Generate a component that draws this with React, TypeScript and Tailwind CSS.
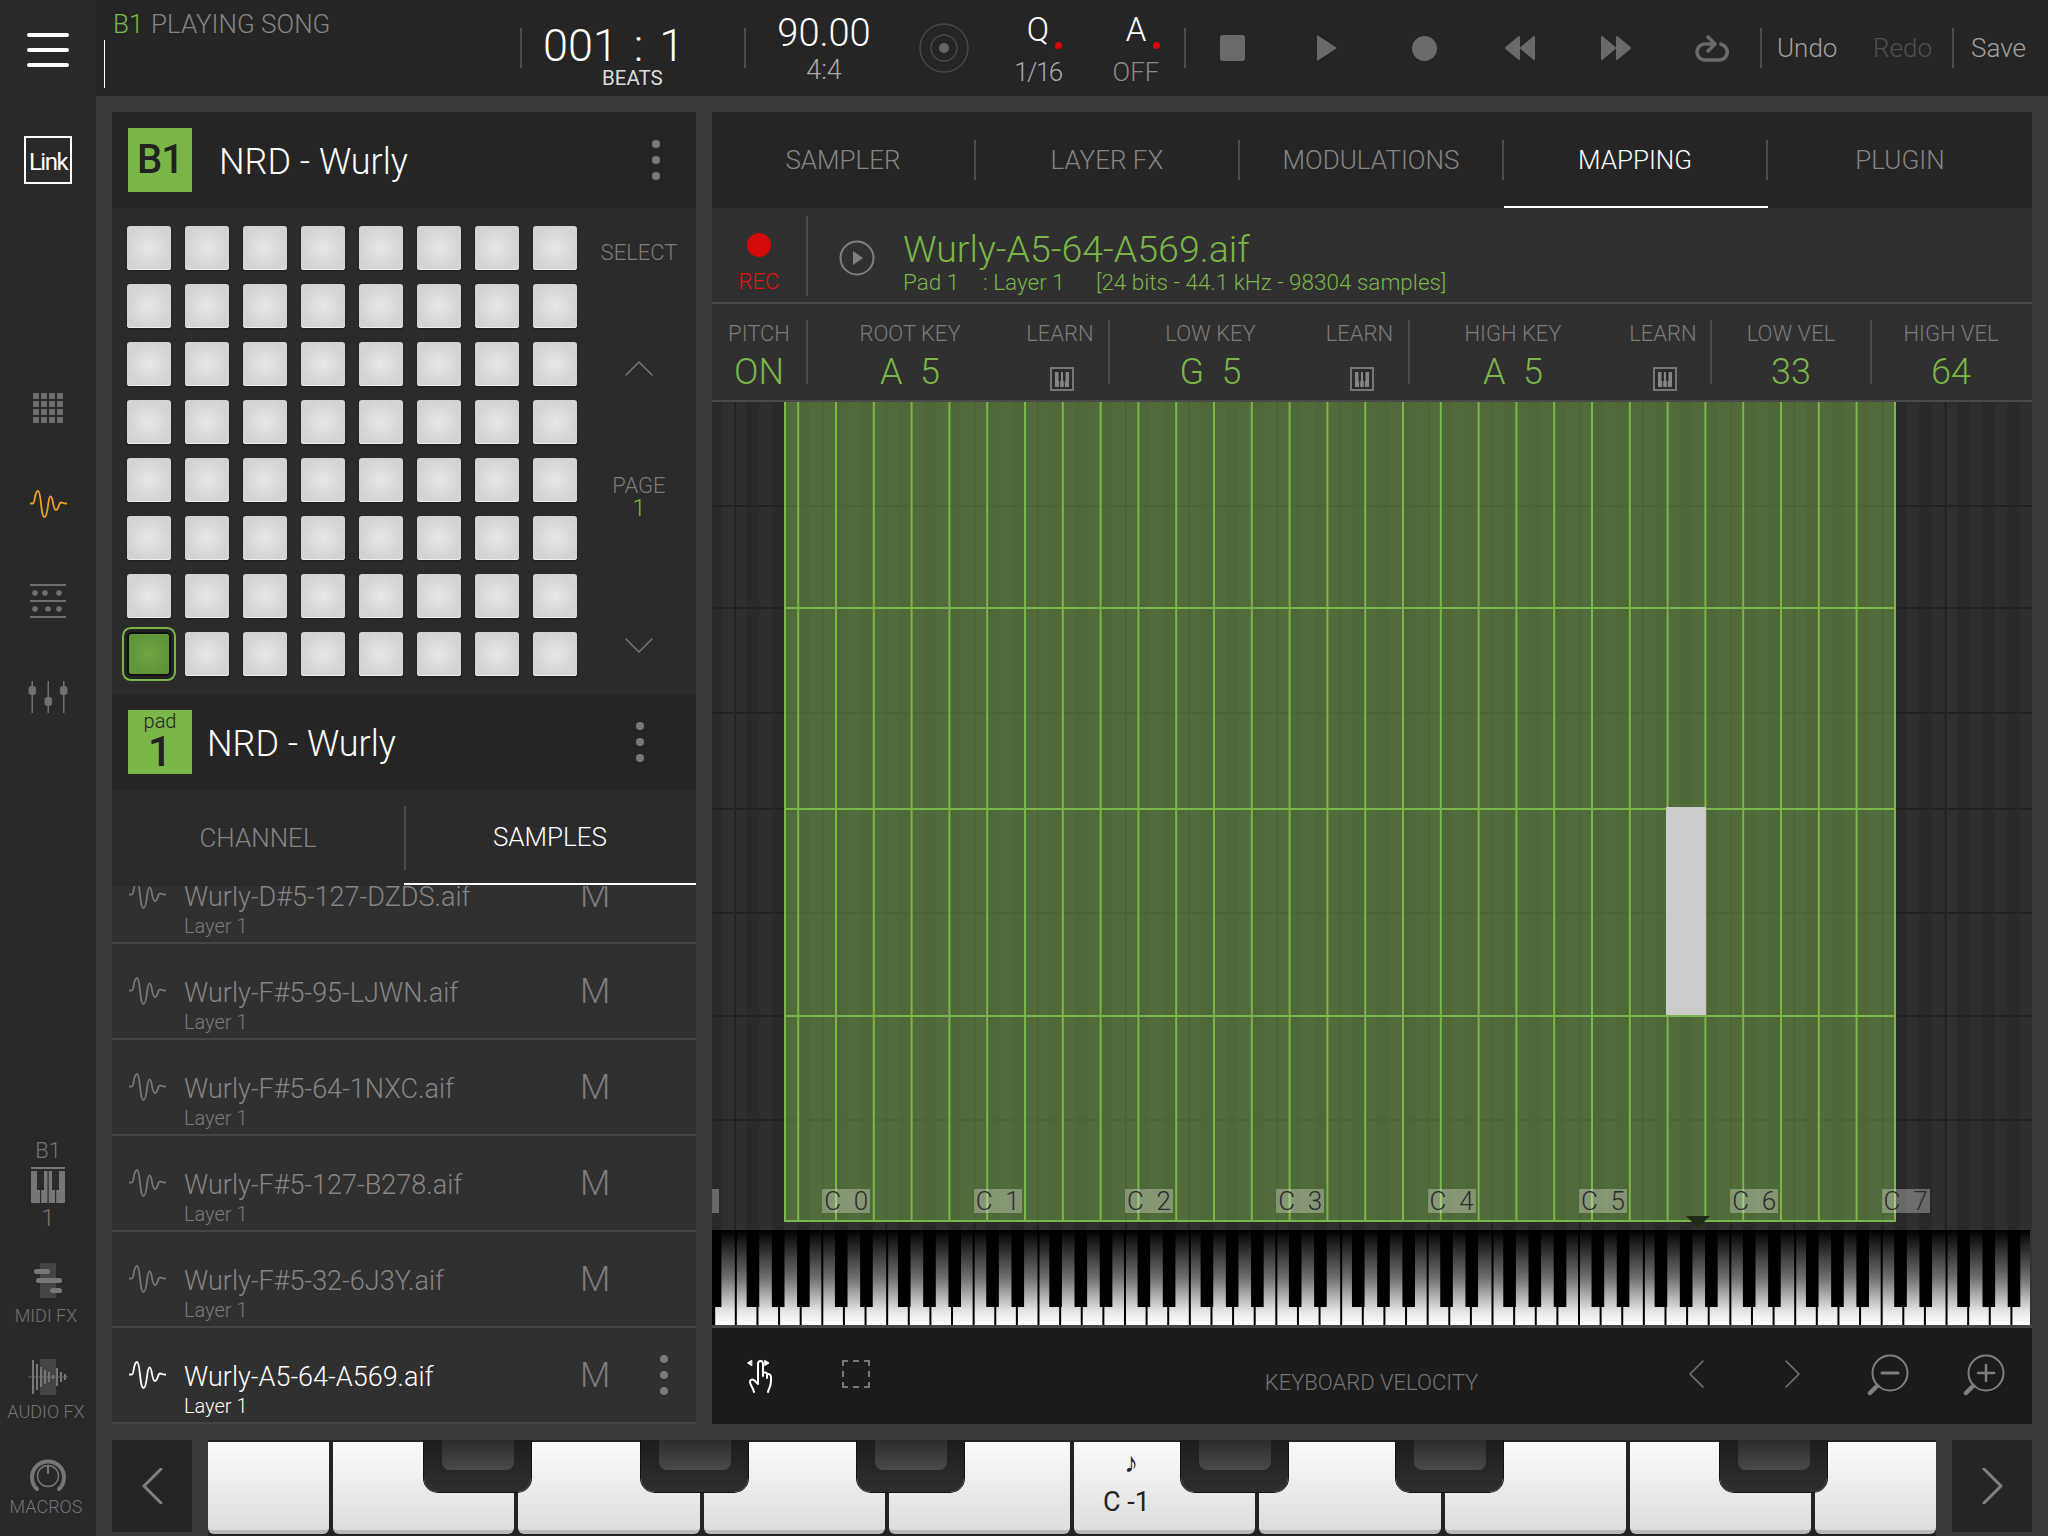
import React from 'react'

const GREEN = '#7ab648'
const GRAY = '#757575'

const Sep = ({ h = 'h-10' }: { h?: string }) => <div className={`w-[2px] shrink-0 bg-[#4c4c4c] ${h}`} />

const Wave = ({ color, w = 37, h = 28 }: { color: string; w?: number; h?: number }) => (
  <svg width={w} height={h} viewBox="0 0 37 28" fill="none" stroke={color} strokeWidth="1.8" strokeLinecap="round">
    <path d="M0.5 13.5 H3 C5 13.5 4.5 1 8 1 C11.5 1 10.5 27 14.5 27 C18.5 27 17.5 6.5 20.5 6.5 C23.5 6.5 22.5 20 26 20 C29 20 28.5 12.5 31 12.5 C33 12.5 34 14 36.5 13.5" />
  </svg>
)

const Kebab = () => (
  <div className="flex flex-col gap-[8px]">
    <div className="w-2 h-2 rounded-full bg-[#7a7a7a]" />
    <div className="w-2 h-2 rounded-full bg-[#7a7a7a]" />
    <div className="w-2 h-2 rounded-full bg-[#7a7a7a]" />
  </div>
)

const Chevron = ({ d, w, h, color = '#777', sw = 1.5 }: { d: string; w: number; h: number; color?: string; sw?: number }) => (
  <svg width={w} height={h} viewBox={`0 0 ${w} ${h}`} fill="none" stroke={color} strokeWidth={sw} strokeLinecap="round" strokeLinejoin="round">
    <path d={d} />
  </svg>
)

const Rail = () => (
  <div className="w-24 h-[1536px] shrink-0 bg-[#292929] flex flex-col items-center text-[#757575]">
    <svg className="mt-8" width="42" height="36" viewBox="0 0 42 36" fill="none" stroke="#fff" strokeWidth="4" strokeLinecap="round">
      <path d="M2 3 H40 M2 18 H40 M2 33 H40" />
    </svg>
    <div className="mt-[68px] w-12 h-12 border-2 border-white flex items-center justify-center text-white text-[24px] leading-none tracking-[-1.5px] font-normal pt-[3px]">Link</div>
    <div className="mt-[209px] grid grid-cols-4 gap-[2px] w-[30px]">
      {Array.from({ length: 16 }).map((_, i) => (
        <div key={i} className="h-[6px] bg-[#707070] rounded-[1px]" />
      ))}
    </div>
    <div className="mt-[67px]">
      <Wave color="#f5a01e" w={37} h={28} />
    </div>
    <svg className="mt-[66px]" width="36" height="34" viewBox="0 0 36 34" fill="#707070" stroke="none">
      <rect x="0" y="0" width="36" height="2" />
      <rect x="0" y="16" width="36" height="2" />
      <rect x="0" y="32" width="36" height="2" />
      <circle cx="5" cy="9" r="2.8" /><circle cx="15" cy="9" r="2.8" /><circle cx="29" cy="9" r="2.8" />
      <circle cx="5" cy="25" r="2.8" /><circle cx="18" cy="25" r="2.8" /><circle cx="29" cy="25" r="2.8" />
    </svg>
    <svg className="mt-[63px]" width="40" height="32" viewBox="0 0 40 32" fill="#707070" stroke="none">
      <rect x="3.5" y="0" width="1.5" height="32" /><rect x="19.5" y="0" width="1.5" height="32" /><rect x="35" y="0" width="1.5" height="32" />
      <rect x="0.5" y="5" width="7.5" height="9" rx="3" /><rect x="16.5" y="16" width="7.5" height="9" rx="3" /><rect x="32" y="5" width="7.5" height="9" rx="3" />
    </svg>

    <div className="mt-[426px] text-[22px] leading-6">B1</div>
    <svg className="mt-1" width="34" height="36" viewBox="0 0 34 36">
      <rect x="0" y="0" width="34" height="2" fill="#777" />
      <rect x="0" y="4" width="34" height="32" fill="#777" rx="1" />
      <rect x="6" y="4" width="7" height="19" fill="#2b2b2b" />
      <rect x="21" y="4" width="7" height="19" fill="#2b2b2b" />
      <rect x="16.5" y="4" width="1.2" height="32" fill="#2b2b2b" />
      <rect x="9" y="23" width="1.2" height="13" fill="#2b2b2b" />
      <rect x="24" y="23" width="1.2" height="13" fill="#2b2b2b" />
    </svg>
    <div className="mt-[3px] text-[24px] leading-6">1</div>
    <svg className="mt-[33px]" width="30" height="35" viewBox="0 0 30 35">
      <rect x="7" y="0" width="16" height="35" rx="1" fill="#444" />
      <rect x="1" y="6" width="16" height="5" rx="2.5" fill="#777" />
      <rect x="3" y="15" width="26" height="5" rx="2.5" fill="#777" />
      <rect x="17" y="25" width="12" height="5" rx="2.5" fill="#777" />
    </svg>
    <div className="mt-[6px] pr-1 text-[18px] leading-6">MIDI FX</div>
    <svg className="mt-[31px]" width="40" height="36" viewBox="0 0 40 36">
      <rect x="12" y="0" width="16" height="36" fill="#444" />
      <rect x="0" y="17.5" width="40" height="1" fill="#666" />
      {[17, 13, 10, 7, 5, 2, 9, 5, 3].map((h, i) => (
        <rect key={i} x={4 + i * 4} y={18 - h} width="2" height={h * 2} fill="#777" />
      ))}
    </svg>
    <div className="mt-[5px] pr-1 text-[18px] leading-6 whitespace-nowrap">AUDIO FX</div>
    <svg className="mt-8" width="38" height="36" viewBox="0 0 38 36" fill="none" stroke="#777">
      <path d="M8 33 A16 16 0 1 1 30 33" strokeWidth="4" strokeLinecap="round" />
      <circle cx="19" cy="20" r="10.5" strokeWidth="1.5" />
      <path d="M19 9 V18" strokeWidth="2" />
    </svg>
    <div className="mt-[3px] pr-1 text-[18px] leading-6">MACROS</div>
  </div>
)

const TopBar = () => (
  <div className="h-24 shrink-0 bg-[#252525] flex items-center">
    <div className="w-[424px] h-24 flex flex-col shrink-0">
      <div className="pl-[17px] pt-[10px] flex text-[26px] leading-7 text-[#858585]">
        <span className="w-[38px] text-[#7ab648]">B1</span>
        <span>PLAYING SONG</span>
      </div>
      <div className="ml-2 mt-[2px] w-[1px] h-12 bg-white" />
    </div>
    <Sep />
    <div className="w-[222px] h-24 flex flex-col pl-[21px] pt-[21px] shrink-0 text-white">
      <div className="text-[45px] leading-[50px] whitespace-pre [word-spacing:5px]">001 : 1</div>
      <div className="pl-[59px] -mt-[5px] text-[20.5px] leading-6 text-[#dddddd] font-normal">BEATS</div>
    </div>
    <Sep />
    <div className="w-[156px] h-24 flex flex-col items-center pt-[13px] shrink-0">
      <div className="text-[38px] leading-10 text-white">90.00</div>
      <div className="mt-[1px] text-[27px] leading-8 text-[#a8a8a8]">4:4</div>
    </div>
    <div className="w-[84px] flex justify-center shrink-0">
      <svg width="50" height="50" viewBox="0 0 50 50" fill="none" stroke="#484848" strokeWidth="1.5">
        <circle cx="25" cy="25" r="24" />
        <circle cx="25" cy="25" r="13" />
        <circle cx="25" cy="25" r="5" fill="#666" stroke="none" />
      </svg>
    </div>
    <div className="w-[104px] h-24 flex flex-col items-center pt-3 shrink-0">
      <div className="relative text-[33px] leading-9 text-white">
        Q
        <div className="absolute left-[28px] top-[30px] w-[7px] h-[7px] rounded-full bg-[#d40a0a]" />
      </div>
      <div className="mt-[9px] text-[26px] leading-[30px] tracking-[-1.5px] text-[#a8a8a8]">1/16</div>
    </div>
    <div className="w-[94px] h-24 flex flex-col items-center pt-3 pr-[2px] shrink-0">
      <div className="relative text-[33px] leading-9 text-white">
        A
        <div className="absolute left-[27px] top-[30px] w-[7px] h-[7px] rounded-full bg-[#d40a0a]" />
      </div>
      <div className="mt-[9px] text-[26px] leading-[30px] text-[#8a8a8a]">OFF</div>
    </div>
    <Sep />
    <div className="w-[92px] flex justify-center shrink-0">
      <div className="w-[25px] h-[26px] rounded-[3px] bg-[#6a6a6a]" />
    </div>
    <div className="w-[98px] flex justify-center shrink-0">
      <svg width="20" height="26" viewBox="0 0 20 26" fill="#6a6a6a"><path d="M0 0 L20 13 L0 26 Z" /></svg>
    </div>
    <div className="w-24 flex justify-center shrink-0">
      <div className="w-[25px] h-[25px] rounded-full bg-[#6a6a6a]" />
    </div>
    <div className="w-24 flex justify-center shrink-0">
      <svg width="32" height="26" viewBox="0 0 32 26" fill="#6a6a6a" stroke="#6a6a6a" strokeWidth="2" strokeLinejoin="round">
        <path d="M15 2 L2 13 L15 24 Z M30 2 L17 13 L30 24 Z" />
      </svg>
    </div>
    <div className="w-24 flex justify-center shrink-0">
      <svg width="32" height="26" viewBox="0 0 32 26" fill="#6a6a6a" stroke="#6a6a6a" strokeWidth="2" strokeLinejoin="round">
        <path d="M2 2 L15 13 L2 24 Z M17 2 L30 13 L17 24 Z" />
      </svg>
    </div>
    <div className="w-24 flex justify-center shrink-0">
      <svg width="34" height="28" viewBox="0 0 34 28" fill="none" stroke="#6a6a6a" strokeWidth="3.6" strokeLinecap="round" strokeLinejoin="round">
        <path d="M17 10 H10 A8 8 0 0 0 10 26 H24 A8 8 0 0 0 26 10.2" />
        <path d="M13 3 L20 10 L13 17" />
      </svg>
    </div>
    <Sep />
    <div className="w-[111px] pl-[15px] text-[26px] text-[#a0a0a0] shrink-0">Undo</div>
    <div className="w-[79px] text-[26px] text-[#505050] shrink-0">Redo</div>
    <Sep />
    <div className="pl-[17px] text-[26px] text-[#a0a0a0]">Save</div>
  </div>
)

const Pad = ({ selected }: { selected?: boolean }) =>
  selected ? (
    <div className="w-11 h-11 rounded-[4px] border-2 border-[#111] bg-[radial-gradient(circle,#6fa541_0%,#5f9438_75%)] shadow-[0_0_0_3px_#222,0_0_0_5px_#7ab648]" />
  ) : (
    <div className="w-11 h-11 rounded-[3px] bg-[radial-gradient(circle,#e8e8e8_0%,#d3d3d3_72%)] shadow-[inset_0_-1px_0_#eeeeee,0_1px_2px_#1c1c1c]" />
  )

const samples = [
  'Wurly-D#5-127-DZDS.aif',
  'Wurly-F#5-95-LJWN.aif',
  'Wurly-F#5-64-1NXC.aif',
  'Wurly-F#5-127-B278.aif',
  'Wurly-F#5-32-6J3Y.aif',
  'Wurly-A5-64-A569.aif',
]

const LeftPanel = () => (
  <div className="w-[584px] h-[1312px] shrink-0 flex flex-col bg-[#303030]">
    <div className="h-24 shrink-0 bg-[#252525] flex items-center pl-4">
      <div className="w-16 h-16 bg-[#7ab648] flex items-center justify-center text-[40px] tracking-[-1px] font-medium text-[#222]">B1</div>
      <div className="ml-[27px] pt-[3px] flex-1 text-[36px] text-white">NRD - Wurly</div>
      <div className="mr-9">
        <Kebab />
      </div>
    </div>
    <div className="h-[486px] shrink-0 bg-[#2b2b2b] flex">
      <div className="w-[470px] pl-[15px] pt-[18px] shrink-0">
        <div className="grid grid-cols-[repeat(8,44px)] gap-[14px]">
          {Array.from({ length: 64 }).map((_, i) => (
            <Pad key={i} selected={i === 56} />
          ))}
        </div>
      </div>
      <div className="flex-1 flex flex-col items-center text-[22px] leading-6 text-[#7b7b7b]">
        <div className="mt-[33px]">SELECT</div>
        <div className="mt-[96px] h-[14px]">
          <Chevron d="M1 14 L14 1 L27 14" w={28} h={15} />
        </div>
        <div className="mt-[99px]">PAGE</div>
        <div className="-mt-[2px] text-[#7ab648] text-[24px]">1</div>
        <div className="mt-[118px] h-[14px]">
          <Chevron d="M1 1 L14 14 L27 1" w={28} h={15} />
        </div>
      </div>
    </div>
    <div className="h-24 shrink-0 bg-[#252525] flex items-center pl-4">
      <div className="w-16 h-16 bg-[#7ab648] flex flex-col items-center text-[#222]">
        <div className="text-[20px] leading-[20px] pt-[1px]">pad</div>
        <div className="text-[42px] leading-[42px] font-medium">1</div>
      </div>
      <div className="ml-[15px] pt-[3px] flex-1 text-[36px] text-white">NRD - Wurly</div>
      <div className="mr-[52px]">
        <Kebab />
      </div>
    </div>
    <div className="h-24 shrink-0 bg-[#2b2b2b] flex text-[26px]">
      <div className="w-[292px] flex items-center justify-center text-[#858585]">CHANNEL</div>
      <div className="mt-4">
        <Sep h="h-16" />
      </div>
      <div className="flex-1 flex items-center justify-center text-white border-b-2 border-white mb-[1px] -ml-[2px] pt-[1px]">SAMPLES</div>
    </div>
    <div className="flex-1 overflow-hidden">
      <div className="-mt-[38px]">
        {samples.map((s, i) => {
          const active = i === samples.length - 1
          return (
            <div key={s} className="h-24 border-b-2 border-[#454545] flex items-center pl-[17px]">
              <Wave color={active ? '#fff' : GRAY} />
              <div className="ml-[18px] w-[396px] h-[94px] pt-[33px]">
                <div className={`text-[27px] leading-8 ${active ? 'text-white' : 'text-[#858585]'}`}>{s}</div>
                <div className={`text-[20px] leading-6 mt-[1px] ${active ? 'text-white' : 'text-[#7b7b7b]'}`}>Layer 1</div>
              </div>
              <div className="w-[80px] pt-[3px] text-[35px] text-[#7b7b7b]">M</div>
              {active && <Kebab />}
            </div>
          )
        })}
      </div>
    </div>
  </div>
)

const tabs = ['SAMPLER', 'LAYER FX', 'MODULATIONS', 'MAPPING', 'PLUGIN']

const PianoIcon = () => (
  <svg className="mt-[21px] ml-1" width="24" height="24" viewBox="0 0 24 24">
    <rect x="1" y="1" width="22" height="22" fill="#2b2b2b" stroke="#767676" strokeWidth="2" />
    <path d="M5 5 H19 V20 H5 Z" fill="#858585" />
    <path d="M9.7 5 V14 M14.3 5 V14" stroke="#262626" strokeWidth="2.4" />
    <path d="M9.7 14 V20 M14.3 14 V20" stroke="#262626" strokeWidth="1" />
  </svg>
)

const Param = ({ w, label, value }: { w: string; label: string; value: string }) => (
  <div className={`${w} h-24 flex flex-col items-center pt-[17px] shrink-0`}>
    <div className="text-[22px] leading-[26px] text-[#7b7b7b] whitespace-nowrap">{label}</div>
    <div className="mt-[7px] text-[36px] leading-9 text-[#7ab648] whitespace-pre">{value}</div>
  </div>
)

const Learn = ({ w }: { w: string }) => (
  <div className={`${w} h-24 flex flex-col items-center pt-[17px] shrink-0`}>
    <div className="text-[22px] leading-[26px] text-[#7b7b7b] -mb-[1px]">LEARN</div>
    <PianoIcon />
  </div>
)

const ParamSep = () => <Sep h="h-16" />

const GRID_X = 712
const GRID_Y = 402
const SEMI = 151.33 / 12
const C0 = 822.3
const BLACKS = [1, 3, 6, 8, 10]
const octaves = [-2, -1, 0, 1, 2, 3, 4, 5, 6, 7, 8]
const semis: { x: number; black: boolean }[] = []
octaves.forEach((o) => {
  for (let s = 0; s < 12; s++) {
    semis.push({ x: C0 + (o * 12 + s) * SEMI - GRID_X, black: BLACKS.includes(s) })
  }
})
const darkH = [505, 607, 712, 808, 912, 1015, 1119]
const greenH = [607, 808, 1015]
const greenV = Array.from({ length: 29 }).map((_, i) => 835 - 37.8 + i * 37.8)
const cLabels = [-1, 0, 1, 2, 3, 4, 5, 6, 7]

const MappingGrid = () => (
  <div className="relative h-[828px] overflow-hidden shrink-0">
    <svg width="1320" height="828" viewBox="0 0 1320 828" className="block">
      <rect width="1320" height="828" fill="#2e2e2e" />
      {semis.map((n, i) => (
        <rect key={i} x={n.x} y="0" width={SEMI} height="828" fill={n.black ? '#292929' : '#2f2f2f'} />
      ))}
      {octaves.map((o) => (
        <g key={o} fill="#222222">
          <rect x={C0 + o * 12 * SEMI - GRID_X} y="0" width="2" height="828" />
          <rect x={C0 + (o * 12 + 5) * SEMI - GRID_X} y="0" width="2" height="828" />
        </g>
      ))}
      {darkH.map((y) => (
        <rect key={y} x="0" y={y - GRID_Y} width="1320" height="2" fill="#212121" />
      ))}
      <rect x={785 - GRID_X} y="0" width={1895 - 785} height={1222 - GRID_Y} fill="#76a848" fillOpacity="0.5" />
      {greenV.map((x) => (
        <rect key={x} x={x - GRID_X} y="0" width="2" height={1222 - GRID_Y} fill={GREEN} />
      ))}
      <rect x={784 - GRID_X} y="0" width="2" height={1222 - GRID_Y} fill={GREEN} />
      <rect x={1894 - GRID_X} y="0" width="2" height={1222 - GRID_Y} fill={GREEN} />
      {greenH.map((y) => (
        <rect key={y} x={785 - GRID_X} y={y - GRID_Y} width={1895 - 785} height="2" fill={GREEN} />
      ))}
      <rect x={784 - GRID_X} y={1220 - GRID_Y} width={1896 - 784} height="2" fill={GREEN} />
      <rect x={1666 - GRID_X} y={807 - GRID_Y} width="40" height="208" fill="#cbcbcb" />
      <path d={`M${1686 - GRID_X} ${1216 - GRID_Y} H${1710 - GRID_X} L${1698 - GRID_X} ${1228 - GRID_Y} Z`} fill="#1e2a14" />
    </svg>
    {cLabels.map((o) => (
      <div
        key={o}
        className="absolute top-[787px] h-6 w-12 bg-[#ffffff4d] text-[#2c2c2c] text-[26px] leading-6 text-center whitespace-pre"
        style={{ left: C0 + o * 151.33 - GRID_X }}
      >
        {o < 0 ? 'C -1' : `C  ${o}`}
      </div>
    ))}
  </div>
)

const WHITE = 21.62
const pianoWhites = Array.from({ length: 70 }).map((_, i) => C0 - 7 * WHITE + i * WHITE - GRID_X)
const pianoBlacks = semis.filter((n) => n.black)

const PianoStrip = () => (
  <svg width="1320" height="95" viewBox="0 0 1320 95" className="block shrink-0">
    <defs>
      <linearGradient id="keyfade" x1="0" x2="0" y1="0" y2="1">
        <stop offset="0" stopColor="#000" />
        <stop offset="0.5" stopColor="#6e6e6e" />
        <stop offset="0.85" stopColor="#e4e4e4" />
        <stop offset="1" stopColor="#fff" />
      </linearGradient>
    </defs>
    <rect width="1320" height="95" fill="url(#keyfade)" />
    {pianoWhites.map((x) => (
      <rect key={x} x={x - 1} y="0" width="2" height="95" fill="#000" />
    ))}
    {pianoBlacks.map((n) => (
      <rect key={n.x} x={n.x} y="0" width={SEMI} height="77" fill="#000" />
    ))}
    <rect x="0" y="0" width="2" height="95" fill="#000" />
    <rect x="1318" y="0" width="2" height="95" fill="#333" />
  </svg>
)

const Toolbar = () => (
  <div className="flex-1 bg-[#1b1b1b] flex items-center relative">
    <div className="w-[96px] flex justify-center shrink-0">
      <svg width="28" height="34" viewBox="0 0 28 34" fill="none" stroke="#fff" strokeWidth="2" strokeLinecap="round" strokeLinejoin="round">
        <path d="M8 33 C7 28 4 26 4 23 C4 20 7 20 9 22 L12 25 V5 C12 1 17 1 17 5 V17 M17 15 C17 13 21 13 21 15 V19 M21 16 C21 14 25 15 25 18 V22 C25 27 23 29 22 33" />
        <path d="M5.5 1.5 L1.5 4 L5.5 6.5 Z M19 1.5 L23 4 L19 6.5 Z" fill="#fff" stroke="#fff" strokeWidth="1" />
      </svg>
    </div>
    <div className="ml-[34px] w-[28px] h-[28px] border-2 border-dashed border-[#777] -mt-1 shrink-0" />
    <div className="ml-[393px] w-[217px] text-center text-[22px] text-[#757575] whitespace-nowrap pt-3 shrink-0">KEYBOARD VELOCITY</div>
    <div className="ml-[209px] -mt-1 h-7">
      <Chevron d="M14 1 L1 14 L14 27" w={15} h={28} color="#777" />
    </div>
    <div className="ml-[81px] -mt-1 h-7">
      <Chevron d="M1 1 L14 14 L1 27" w={15} h={28} color="#777" />
    </div>
    <svg className="ml-[67px] -mt-[2px]" width="42" height="42" viewBox="0 0 42 42" fill="none" stroke="#808080">
      <circle cx="23" cy="19" r="17.5" strokeWidth="2" />
      <path d="M15 19 H31" strokeWidth="3" strokeLinecap="round" />
      <path d="M3 39 L10 32" strokeWidth="4.5" strokeLinecap="round" />
    </svg>
    <svg className="ml-[54px] -mt-[2px]" width="42" height="42" viewBox="0 0 42 42" fill="none" stroke="#808080">
      <circle cx="23" cy="19" r="17.5" strokeWidth="2" />
      <path d="M15 19 H31 M23 11 V27" strokeWidth="2.5" strokeLinecap="round" />
      <path d="M3 39 L10 32" strokeWidth="4.5" strokeLinecap="round" />
    </svg>
  </div>
)

const RightPanel = () => (
  <div className="w-[1320px] h-[1312px] shrink-0 flex flex-col bg-[#303030]">
    <div className="h-24 shrink-0 bg-[#252525] flex text-[26px] text-[#858585]">
      {tabs.map((t, i) => (
        <div key={t} className={`w-[264px] h-24 flex items-center relative ${t === 'MAPPING' ? 'text-white border-b-2 border-white pt-[2px]' : ''}`}>
          <div className="flex-1 text-center">{t}</div>
          {i < tabs.length - 1 && <Sep />}
        </div>
      ))}
    </div>
    <div className="h-24 shrink-0 border-b-2 border-[#4a4a4a] flex items-start">
      <div className="w-[94px] h-[94px] flex flex-col items-center pt-[25px] shrink-0">
        <div className="w-6 h-6 rounded-full bg-[#d40a0a]" />
        <div className="mt-[11px] text-[22px] leading-7 text-[#e80f0f]">REC</div>
      </div>
      <div className="mt-2">
        <Sep h="h-20" />
      </div>
      <div className="mt-8 ml-[31px] shrink-0">
        <svg width="36" height="36" viewBox="0 0 36 36" fill="none" stroke="#808080" strokeWidth="2">
          <circle cx="18" cy="18" r="16.5" />
          <path d="M14 11 L24 18 L14 25 Z" fill="#808080" stroke="none" />
        </svg>
      </div>
      <div className="ml-[28px] pt-[18px] text-[#7ab648]">
        <div className="text-[37.5px] leading-[46px]">Wurly-A5-64-A569.aif</div>
        <div className="-mt-[4px] flex text-[22.5px] leading-7 whitespace-pre">
          <div className="w-[80px]">Pad 1</div>
          <div className="w-[113px]">: Layer 1</div>
          <div>[24 bits - 44.1 kHz - 98304 samples]</div>
        </div>
      </div>
    </div>
    <div className="h-[98px] shrink-0 border-b-2 border-[#4a4a4a] flex items-center">
      <Param w="w-[94px]" label="PITCH" value="ON" />
      <ParamSep />
      <Param w="w-[204px]" label="ROOT KEY" value="A  5" />
      <Learn w="w-[96px]" />
      <ParamSep />
      <Param w="w-[201px]" label="LOW KEY" value="G  5" />
      <Learn w="w-[97px]" />
      <ParamSep />
      <Param w="w-[206px]" label="HIGH KEY" value="A  5" />
      <Learn w="w-[94px]" />
      <ParamSep />
      <Param w="w-[158px]" label="LOW VEL" value="33" />
      <ParamSep />
      <Param w="w-[158px]" label="HIGH VEL" value="64" />
    </div>
    <MappingGrid />
    <PianoStrip />
    <div className="h-[3px] shrink-0 bg-[#444]" />
    <Toolbar />
  </div>
)

// big keyboard along the bottom
const bigKeys = [125, 185.25, 185.25, 185.25, 185.25, 185.25, 185.25, 185.25, 185.25, 121]
const bigBlacks = [424, 641, 857, 1181, 1396, 1720]

const Keyboard = () => (
  <div className="h-24 shrink-0 flex pl-4 gap-4">
    <div className="w-20 h-[92px] bg-[#252525] flex items-center justify-center shrink-0">
      <Chevron d="M19 1 L2 18 L19 35" w={21} h={36} color="#808080" sw={3} />
    </div>
    <div className="relative w-[1728px] h-24 shrink-0 flex bg-[#232323] overflow-hidden pt-[2px]">
      {bigKeys.map((w, i) => (
        <div key={i} className={`shrink-0 ${i < bigKeys.length - 1 ? 'pr-1' : ''}`} style={{ width: w }}>
          <div className="h-[92px] rounded-b-[6px] bg-[linear-gradient(#fbfbfb,#f2f2f2_30%,#dddddd)] border-b-4 border-[#b9b9b9]" />
        </div>
      ))}
      {bigBlacks.map((x) => (
        <div
          key={x}
          className="absolute top-0 w-[107px] h-[52px] rounded-b-[14px] bg-[linear-gradient(#1c1c1c,#2f2f2f)] shadow-[0_0_0_1px_#111] flex justify-center"
          style={{ left: x - 208 }}
        >
          <div className="w-[72px] h-[30px] rounded-b-[8px] bg-[linear-gradient(#2c2c2c,#4a4a4a)]" />
        </div>
      ))}
      <div className="absolute top-[9px] left-[916px] text-[#222] text-[28px] leading-7 [font-family:'DejaVu_Sans',sans-serif]">♪</div>
      <div className="absolute top-[47px] left-[895px] text-[#222] text-[27px] leading-[30px] font-normal">C -1</div>
    </div>
    <div className="w-20 h-[92px] bg-[#252525] flex items-center justify-center shrink-0">
      <Chevron d="M2 1 L19 18 L2 35" w={21} h={36} color="#808080" sw={3} />
    </div>
  </div>
)

export default function App() {
  return (
    <div className="w-[2048px] h-[1536px] overflow-hidden flex bg-[#3a3a3a] font-light [font-family:Roboto,'Noto_Sans',sans-serif]">
      <Rail />
      <div className="w-[1952px] h-[1536px] flex flex-col">
        <TopBar />
        <div className="h-[1344px] shrink-0 flex gap-4 pl-4 pt-4">
          <LeftPanel />
          <RightPanel />
        </div>
        <Keyboard />
      </div>
    </div>
  )
}
